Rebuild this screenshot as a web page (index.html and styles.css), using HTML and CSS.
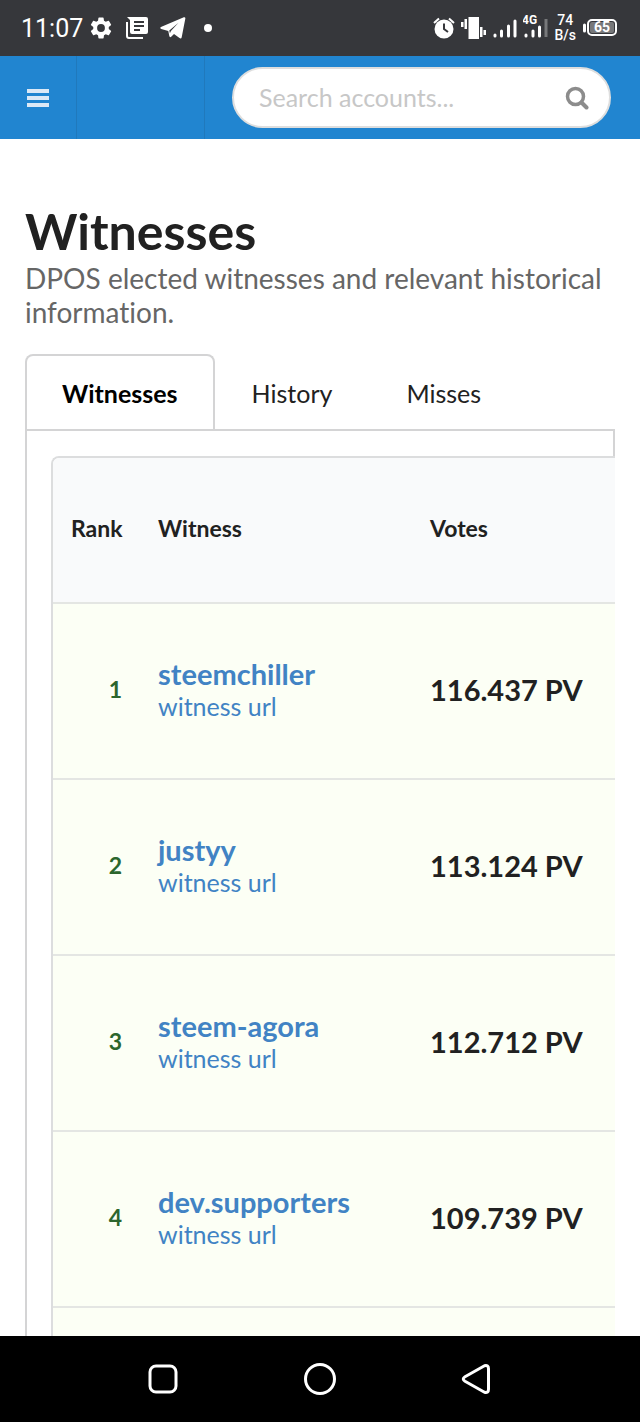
FILE: index.html
```html
<!DOCTYPE html>
<html lang="en">
<head>
<meta charset="utf-8">
<meta name="viewport" content="width=device-width, initial-scale=1">
<title>Witnesses</title>
<link rel="stylesheet" href="styles.css">
</head>
<body>
<div class="status-bar">
  <div class="status-group status-left">
    <span class="clock">11:07</span>
    <svg width="26" height="26" viewBox="0 0 24 24" fill="currentColor"><path d="M19.14 12.94c.04-.3.06-.61.06-.94s-.02-.64-.07-.94l2.03-1.58a.49.49 0 0 0 .12-.61l-1.92-3.32a.49.49 0 0 0-.59-.22l-2.39.96a7 7 0 0 0-1.62-.94l-.36-2.54a.48.48 0 0 0-.48-.41h-3.84a.48.48 0 0 0-.47.41l-.36 2.54c-.59.24-1.13.57-1.62.94l-2.39-.96a.48.48 0 0 0-.59.22L2.74 8.87a.48.48 0 0 0 .12.61l2.03 1.58a7.5 7.5 0 0 0 0 1.88l-2.03 1.58a.49.49 0 0 0-.12.61l1.92 3.32c.12.22.37.29.59.22l2.39-.96c.5.38 1.03.7 1.62.94l.36 2.54c.05.24.24.41.48.41h3.84c.24 0 .44-.17.47-.41l.36-2.54a7 7 0 0 0 1.62-.94l2.39.96c.22.08.47 0 .59-.22l1.92-3.32a.48.48 0 0 0-.12-.61zM12 15.6a3.6 3.6 0 1 1 0-7.2 3.6 3.6 0 0 1 0 7.2z"/></svg>
    <svg width="24" height="24" viewBox="0 0 24 24" fill="none"><path fill="currentColor" fill-rule="evenodd" d="M2 1h19a2 2 0 0 1 2 2v13a2 2 0 0 1-2 2H7a2 2 0 0 1-2-2V4zM9 5v2h10V5zM9 9v2h10V9zM9 13v2h6v-2z"/><path stroke="currentColor" stroke-width="2" d="M2 6v14a2 2 0 0 0 2 2h14"/></svg>
    <svg class="plane" width="26" height="24" viewBox="0 0 26 24" fill="currentColor"><path d="M23.800 1.300c1.100-.4 1.800.2 1.500 1.500l-3.600 18.500c-.3 1.400-1.200 1.500-2.200.8l-5.500-4.100-2.800 2.700c-.8.8-1.700.5-1.900-.6l-1-5.100-7-2.100c-1.400-.5-1.400-1.500.2-2.100zM18.500 6.800 9.300 14.600l.6 2.600 1-2.200z"/></svg>
    <svg width="8" height="8" viewBox="0 0 8 8"><circle cx="4" cy="4" r="4" fill="currentColor"/></svg>
  </div>
  <div class="status-group status-right">
    <svg width="22" height="22" viewBox="0 0 22 22"><circle cx="11" cy="12" r="9.500" fill="currentColor"/><path d="M1 6 6 1.500M21 6l-5-4.500" stroke="currentColor" stroke-width="2"/><path d="M11 6.500V12l4 3" fill="none" stroke="#36373b" stroke-width="2"/></svg>
    <svg width="26" height="24" viewBox="0 0 26 24" fill="currentColor"><path d="M7.500 1H18v22H7.500zM0 6h2.500v5H0zM3.500 3H6v10H3.500zM19 11h2.500v10H19zM22.500 14H25v5h-2.500z"/></svg>
    <svg width="24" height="20" viewBox="0 0 24 20" stroke="currentColor" stroke-width="3" stroke-linecap="round"><path d="M2 17v1M8.500 13v5M15.500 8v10M22 3v15"/></svg>
    <svg width="25" height="28" viewBox="0 0 25 28"><text class="network" x="-1" y="10">4G</text><g fill="none" stroke="currentColor" stroke-width="3" stroke-linecap="round"><path d="M3 21v1M10 17v5M16.500 13v9"/><path d="M23 5v18" stroke="#77787a" stroke-linecap="butt"/></g></svg>
    <span class="speed"><span>74</span><span>B/s</span></span>
    <svg width="36" height="18" viewBox="0 0 36 18"><path d="M2.500 6v6" stroke="currentColor" stroke-width="3" stroke-linecap="round"/><rect x="6" y="1" width="28" height="15" rx="4" fill="none" stroke="currentColor" stroke-width="2"/><rect x="8" y="3" width="24" height="11" rx="2" fill="#77787a"/><text class="charge" x="20" y="13" text-anchor="middle">65</text></svg>
  </div>
</div>

<header class="navbar">
  <button class="nav-item menu-button" type="button" aria-label="Menu">
    <svg width="22" height="20" viewBox="0 0 22 20" fill="currentColor"><path d="M0 1h22v4H0zM0 8h22v4H0zM0 15h22v4H0z"/></svg>
  </button>
  <a class="nav-item brand" href="#" aria-label="Home"></a>
  <form class="search">
    <input class="search-input" type="text" placeholder="Search accounts..." aria-label="Search accounts">
    <button class="search-button" type="button" aria-label="Search">
      <svg width="24" height="24" viewBox="0 0 24 24" fill="none" stroke="currentColor"><circle cx="10.500" cy="10.500" r="8" stroke-width="3.500"/><path d="m16.500 16.500 5 5" stroke-width="4" stroke-linecap="round"/></svg>
    </button>
  </form>
</header>

<main class="page">
  <h1 class="title">Witnesses</h1>
  <p class="subtitle">DPOS elected witnesses and relevant historical information.</p>
  <nav class="tabs">
    <a class="tab active" href="#witnesses">Witnesses</a>
    <a class="tab" href="#history">History</a>
    <a class="tab" href="#misses">Misses</a>
  </nav>
  <section class="panel">
    <div class="table-frame">
      <table class="witness-table">
        <thead>
          <tr><th class="rank">Rank</th><th class="witness">Witness</th><th>Votes</th></tr>
        </thead>
        <tbody>
          <tr><td class="rank">1</td><td><a class="name" href="#">steemchiller</a><a class="url" href="#">witness url</a></td><td class="votes">116.437 PV</td></tr>
          <tr><td class="rank">2</td><td><a class="name" href="#">justyy</a><a class="url" href="#">witness url</a></td><td class="votes">113.124 PV</td></tr>
          <tr><td class="rank">3</td><td><a class="name" href="#">steem-agora</a><a class="url" href="#">witness url</a></td><td class="votes">112.712 PV</td></tr>
          <tr><td class="rank">4</td><td><a class="name" href="#">dev.supporters</a><a class="url" href="#">witness url</a></td><td class="votes">109.739 PV</td></tr>
          <tr><td class="rank"></td><td></td><td></td></tr>
        </tbody>
      </table>
    </div>
  </section>
</main>

<footer class="system-nav">
  <button class="system-button" type="button" aria-label="Recent apps">
    <svg width="32" height="32" viewBox="0 0 32 32" fill="none" stroke="currentColor" stroke-width="3"><rect x="3" y="3" width="26" height="26" rx="6"/></svg>
  </button>
  <button class="system-button" type="button" aria-label="Home screen">
    <svg width="32" height="32" viewBox="0 0 32 32" fill="none" stroke="currentColor" stroke-width="3"><circle cx="16" cy="16" r="14.500"/></svg>
  </button>
  <button class="system-button" type="button" aria-label="Back">
    <svg width="32" height="32" viewBox="0 0 32 32" fill="none" stroke="currentColor" stroke-width="3" stroke-linejoin="round"><path d="M23.500 2.700 4 13.700q-3.500 2.300 0 4.600l19.500 11q4 1 4-3V5.700q0-4-4-3z"/></svg>
  </button>
</footer>
</body>
</html>
```

FILE: styles.css
```css
* {
  box-sizing: border-box;
}

body {
  margin: 0;
  height: 100vh;
  display: flex;
  flex-direction: column;
  overflow: hidden;
  background: #fff;
  color: #212121;
  font-family: Lato, "Liberation Sans", sans-serif;
  font-variant-ligatures: none;
}

a {
  color: #4183c4;
  text-decoration: none;
}

button {
  border: 0;
  padding: 0;
  background: none;
  color: inherit;
}

svg {
  display: block;
  flex: none;
}

.status-bar {
  flex: none;
  height: 56px;
  padding: 0 22px 0 21px;
  display: flex;
  align-items: center;
  justify-content: space-between;
  background: #36373b;
  color: #fff;
  font-family: Roboto, sans-serif;
}

.status-group {
  display: flex;
  align-items: center;
}

.status-left {
  gap: 11px;
}

.clock {
  font-size: 25px;
  line-height: 30px;
  padding-top: 2px;
  margin-right: -6px;
}

.plane {
  margin-right: 7px;
}

.status-right {
  gap: 6px;
}

.network {
  font: 700 12px Roboto, sans-serif;
  fill: #fff;
}

.speed {
  display: flex;
  flex-direction: column;
  align-items: center;
  font-size: 14px;
  line-height: 15px;
  font-weight: 500;
}

.charge {
  font: 700 14px Roboto, sans-serif;
  fill: #fff;
}

.navbar {
  flex: none;
  height: 83px;
  display: flex;
  background: #2185d0;
}

.nav-item {
  flex: none;
  display: flex;
  align-items: center;
  justify-content: center;
  border-right: 1px solid #2079bc;
}

.menu-button {
  width: 77px;
  color: #dce9f6;
}

.brand {
  width: 128px;
}

.search {
  flex: 1;
  min-width: 0;
  margin: 11px 29px 11px 27px;
  padding: 0 20px 0 25px;
  display: flex;
  align-items: center;
  border: 2px solid #dedede;
  border-radius: 32px;
  background: #fff;
}

.search-input {
  flex: 1;
  min-width: 0;
  border: 0;
  padding: 0 0 2px;
  outline: 0;
  background: none;
  font: 25px Lato, sans-serif;
}

.search-input::placeholder {
  color: #c7c7c7;
}

.search-button {
  color: #8c8c8c;
}

.page {
  flex: 1;
  min-height: 0;
  overflow: hidden;
  padding: 62px 25px 0;
}

.title {
  margin: 0;
  font-size: 50px;
  line-height: 60px;
}

.subtitle {
  margin: 0 0 25px;
  color: #666;
  font-size: 28px;
  line-height: 34px;
}

.tabs {
  display: flex;
  margin-bottom: -2px;
}

.tab {
  height: 77px;
  padding: 0 35px;
  border: 2px solid transparent;
  border-bottom: 0;
  color: #212121;
  font-size: 25px;
  line-height: 74px;
}

.tab.active {
  border-color: #d4d4d5;
  border-radius: 8px 8px 0 0;
  color: #000;
  font-weight: 700;
}

.panel {
  border: 2px solid #d4d4d5;
  padding: 25px 0 25px 24px;
}

.table-frame {
  margin-right: -2px;
  border: 2px solid #dcddde;
  border-right: 0;
  border-radius: 8px 0 0 8px;
  overflow: hidden;
}

.witness-table {
  width: 100%;
  border-collapse: collapse;
  table-layout: fixed;
}

th,
td {
  padding: 0 18px 4px;
  border-bottom: 2px solid #e4e6e3;
  text-align: left;
}

th {
  height: 145px;
  background: #f9fafb;
  font-size: 23px;
}

td {
  height: 176px;
  background: #fcfff5;
}

.rank {
  width: 87px;
  text-align: right;
}

td.rank {
  color: #2c662d;
  font-size: 23px;
  font-weight: 700;
}

.witness {
  width: 272px;
}

.name,
.url {
  display: block;
  font-size: 25px;
  line-height: 30px;
}

.name {
  font-size: 29px;
  line-height: 34px;
  font-weight: 700;
}

.votes {
  font-size: 29px;
  font-weight: 700;
}

.system-nav {
  flex: none;
  height: 86px;
  display: flex;
  align-items: center;
  justify-content: center;
  gap: 125px;
  background: #000;
  color: #fff;
}
```
